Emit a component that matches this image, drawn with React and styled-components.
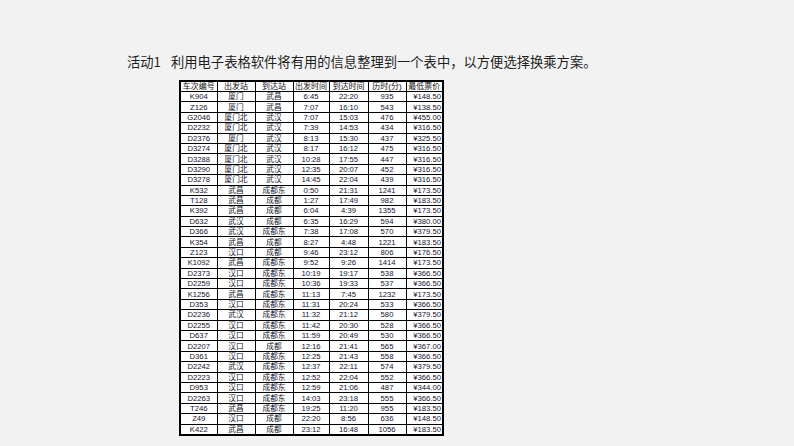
import React from 'react';
import styled, { createGlobalStyle } from 'styled-components';

const GlobalStyle = createGlobalStyle`
  html, body {
    margin: 0;
    padding: 0;
    background: #f2f2f2;
  }
`;

const Page = styled.div`
  width: 794px;
  height: 446px;
  box-sizing: border-box;
  padding: 53px 0 0 127px;
  display: flex;
  flex-direction: column;
  background: #f2f2f2;
  overflow: hidden;
`;

const Title = styled.div`
  display: flex;
  gap: 10px;
  height: 18px;
  line-height: 18px;
  font-family: 'Noto Sans CJK SC', sans-serif;
  font-size: 13.3px;
  color: #1e1e1e;
  margin-bottom: 9px;
`;

const Table = styled.table`
  margin-left: 52px;
  border-collapse: collapse;
  table-layout: fixed;
  width: 263px;
  border: 2px solid #000;
  background: #fff;
  font-family: 'Liberation Sans', 'Noto Sans CJK SC', sans-serif;
`;

const Row = styled.tr`
  height: 10.4px;
`;

const Head = styled.th`
  border: 1px solid #000;
  padding: 0;
  font-size: 8px;
  line-height: 9px;
  font-weight: normal;
  color: #111;
  white-space: nowrap;
  overflow: hidden;
  text-align: center;
`;

const Cell = styled.td`
  border: 1px solid #000;
  padding: 0 ${p => (p.$right ? '1px' : '0')} 0 0;
  font-size: 7.7px;
  line-height: 9px;
  color: #14142e;
  white-space: nowrap;
  overflow: hidden;
  text-align: ${p => (p.$right ? 'right' : 'center')};
`;

const widths = [37, 38, 38, 36, 39, 38, 37];
const headers = ['车次编号', '出发站', '到达站', '出发时间', '到达时间', '历时(分)', '最低票价'];

const rows = [
  ['K904', '厦门', '武昌', '6:45', '22:20', '935', '¥148.50'],
  ['Z126', '厦门', '武昌', '7:07', '16:10', '543', '¥138.50'],
  ['G2046', '厦门北', '武汉', '7:07', '15:03', '476', '¥455.00'],
  ['D2232', '厦门北', '武汉', '7:39', '14:53', '434', '¥316.50'],
  ['D2376', '厦门', '武汉', '8:13', '15:30', '437', '¥325.50'],
  ['D3274', '厦门北', '武汉', '8:17', '16:12', '475', '¥316.50'],
  ['D3288', '厦门北', '武汉', '10:28', '17:55', '447', '¥316.50'],
  ['D3290', '厦门北', '武汉', '12:35', '20:07', '452', '¥316.50'],
  ['D3278', '厦门北', '武汉', '14:45', '22:04', '439', '¥316.50'],
  ['K532', '武昌', '成都东', '0:50', '21:31', '1241', '¥173.50'],
  ['T128', '武昌', '成都', '1:27', '17:49', '982', '¥183.50'],
  ['K392', '武昌', '成都', '6:04', '4:39', '1355', '¥173.50'],
  ['D632', '武汉', '成都', '6:35', '16:29', '594', '¥380.00'],
  ['D366', '武汉', '成都东', '7:38', '17:08', '570', '¥379.50'],
  ['K354', '武昌', '成都', '8:27', '4:48', '1221', '¥183.50'],
  ['Z123', '汉口', '成都', '9:46', '23:12', '806', '¥176.50'],
  ['K1092', '武昌', '成都东', '9:52', '9:26', '1414', '¥173.50'],
  ['D2373', '汉口', '成都东', '10:19', '19:17', '538', '¥366.50'],
  ['D2259', '汉口', '成都东', '10:36', '19:33', '537', '¥366.50'],
  ['K1256', '武昌', '成都东', '11:13', '7:45', '1232', '¥173.50'],
  ['D353', '汉口', '成都东', '11:31', '20:24', '533', '¥366.50'],
  ['D2236', '武汉', '成都东', '11:32', '21:12', '580', '¥379.50'],
  ['D2255', '汉口', '成都东', '11:42', '20:30', '528', '¥366.50'],
  ['D637', '汉口', '成都东', '11:59', '20:49', '530', '¥366.50'],
  ['D2207', '汉口', '成都', '12:16', '21:41', '565', '¥367.00'],
  ['D361', '汉口', '成都东', '12:25', '21:43', '558', '¥366.50'],
  ['D2242', '武汉', '成都东', '12:37', '22:11', '574', '¥379.50'],
  ['D2223', '汉口', '成都东', '12:52', '22:04', '552', '¥366.50'],
  ['D953', '汉口', '成都东', '12:59', '21:06', '487', '¥344.00'],
  ['D2263', '汉口', '成都东', '14:03', '23:18', '555', '¥366.50'],
  ['T246', '武昌', '成都东', '19:25', '11:20', '955', '¥183.50'],
  ['Z49', '汉口', '成都', '22:20', '8:56', '636', '¥148.50'],
  ['K422', '武昌', '成都', '23:12', '16:48', '1056', '¥183.50'],
];

const App = () => (
  <Page>
    <GlobalStyle />
    <Title>
      <span>活动1</span>
      <span>利用电子表格软件将有用的信息整理到一个表中，以方便选择换乘方案。</span>
    </Title>
    <Table>
      <colgroup>
        {widths.map((w, i) => (
          <col key={i} style={{ width: w }} />
        ))}
      </colgroup>
      <thead>
        <Row>
          {headers.map(h => (
            <Head key={h}>{h}</Head>
          ))}
        </Row>
      </thead>
      <tbody>
        {rows.map(r => (
          <Row key={r[0]}>
            {r.map((v, i) => (
              <Cell key={i} $right={i === 6}>
                {v}
              </Cell>
            ))}
          </Row>
        ))}
      </tbody>
    </Table>
  </Page>
);

export default App;
